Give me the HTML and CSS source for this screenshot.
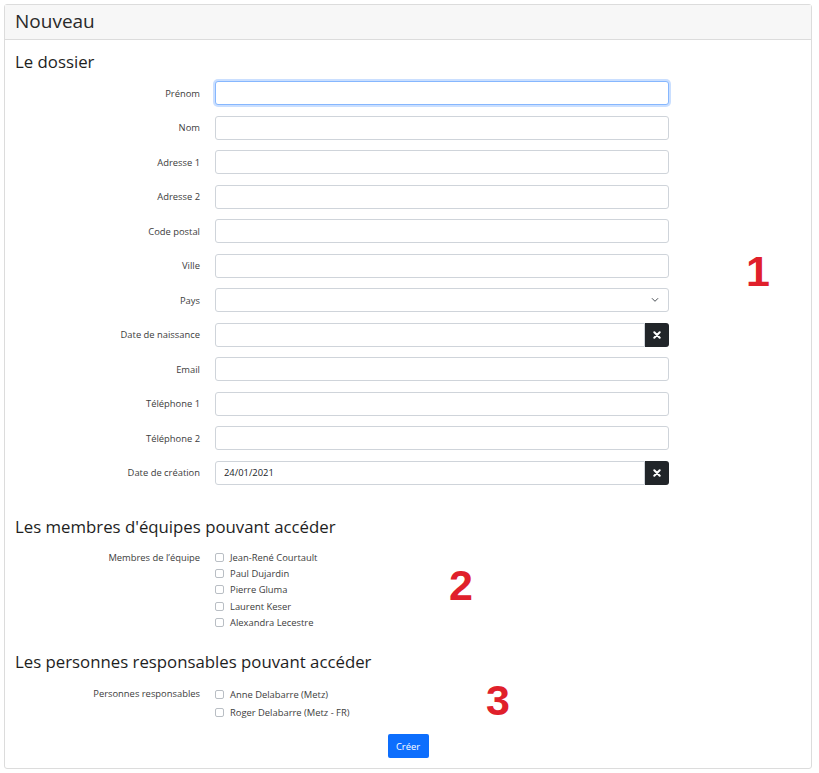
FILE: index.html
```html
<!DOCTYPE html>
<html lang="fr">
<head>
<meta charset="utf-8">
<title>Nouveau</title>
<link rel="stylesheet" href="styles.css">
</head>
<body>
<div class="card">
  <div class="card-header">Nouveau</div>
  <div class="card-body">
    <h2 class="section-title first">Le dossier</h2>
    <div class="form-grid">
      <label class="lbl">Prénom</label><div class="ctl"><input class="inp focus" type="text"></div>
      <label class="lbl">Nom</label><div class="ctl"><input class="inp" type="text"></div>
      <label class="lbl">Adresse 1</label><div class="ctl"><input class="inp" type="text"></div>
      <label class="lbl">Adresse 2</label><div class="ctl"><input class="inp" type="text"></div>
      <label class="lbl">Code postal</label><div class="ctl"><input class="inp" type="text"></div>
      <label class="lbl">Ville</label><div class="ctl"><input class="inp" type="text"></div>
      <label class="lbl">Pays</label>
      <div class="ctl select">
        <span class="sel-box"></span>
        <svg class="chev" width="8" height="6" viewBox="0 0 8 6"><path d="M1.2 1.5 L4 4.3 L6.8 1.5" fill="none" stroke="#4a4f55" stroke-width="1" stroke-linecap="round" stroke-linejoin="round"/></svg>
      </div>
      <label class="lbl">Date de naissance</label>
      <div class="ctl group">
        <input class="inp grp" type="text">
        <span class="clear-btn"><svg width="8" height="8" viewBox="0 0 8 8"><path d="M1.3 1.3 L6.7 6.7 M6.7 1.3 L1.3 6.7" stroke="#fff" stroke-width="2" stroke-linecap="round"/></svg></span>
      </div>
      <label class="lbl">Email</label><div class="ctl"><input class="inp" type="text"></div>
      <label class="lbl">Téléphone 1</label><div class="ctl"><input class="inp" type="text"></div>
      <label class="lbl">Téléphone 2</label><div class="ctl"><input class="inp" type="text"></div>
      <label class="lbl">Date de création</label>
      <div class="ctl group">
        <input class="inp grp" type="text" value="24/01/2021">
        <span class="clear-btn"><svg width="8" height="8" viewBox="0 0 8 8"><path d="M1.3 1.3 L6.7 6.7 M6.7 1.3 L1.3 6.7" stroke="#fff" stroke-width="2" stroke-linecap="round"/></svg></span>
      </div>
    </div>

    <h2 class="section-title second">Les membres d'équipes pouvant accéder</h2>
    <div class="check-row">
      <span class="lbl">Membres de l’équipe</span>
      <div class="checks">
        <label class="chk"><span class="box"></span>Jean-René Courtault</label>
        <label class="chk"><span class="box"></span>Paul Dujardin</label>
        <label class="chk"><span class="box"></span>Pierre Gluma</label>
        <label class="chk"><span class="box"></span>Laurent Keser</label>
        <label class="chk"><span class="box"></span>Alexandra Lecestre</label>
      </div>
    </div>

    <h2 class="section-title third">Les personnes responsables pouvant accéder</h2>
    <div class="check-row resp">
      <span class="lbl">Personnes responsables</span>
      <div class="checks">
        <label class="chk"><span class="box"></span>Anne Delabarre (Metz)</label>
        <label class="chk"><span class="box"></span>Roger Delabarre (Metz - FR)</label>
      </div>
    </div>

    <div class="actions"><button class="btn" type="button">Créer</button></div>
  </div>
  <span class="mark m1">1</span>
  <span class="mark m2">2</span>
  <span class="mark m3">3</span>
</div>
</body>
</html>
```
FILE: styles.css
```css
* { box-sizing: border-box; }
html, body { background: #fff; }
body {
  margin: 0;
  padding: 4px 7px 0 4px;
  font-family: "Open Sans", "Noto Sans", sans-serif;
  color: #212529;
}
.card {
  position: relative;
  border: 1px solid #dcdcdc;
  border-radius: 3px;
  height: 765px;
}
.card-header {
  height: 35px;
  background: #f7f7f7;
  border-bottom: 1px solid #dcdcdc;
  padding: 0 10px;
  font-size: 19px;
  line-height: 33px;
  color: #2a2a2a;
}
.card-body {
  padding: 0 10px;
}
.section-title {
  margin: 0;
  font-size: 16.8px;
  font-weight: 400;
  line-height: 22px;
  color: #1e1e1e;
}
.section-title.first { margin-top: 11px; margin-bottom: 8px; }
.section-title.second { margin-top: 31px; margin-bottom: 12px; }
.section-title.third { margin-top: 21px; margin-bottom: 12px; }
.form-grid {
  display: grid;
  grid-template-columns: 185px 454px;
  column-gap: 15px;
  row-gap: 10.5px;
  align-items: center;
}
.lbl {
  text-align: right;
  font-size: 9.4px;
  color: #3d3d3d;
  white-space: nowrap;
}
.ctl { height: 24px; position: relative; }
.inp {
  display: block;
  width: 100%;
  height: 24px;
  border: 1px solid #cfd4da;
  border-radius: 3px;
  padding: 0 8px;
  font: 9.4px "Open Sans", "Noto Sans", sans-serif;
  color: #212529;
  background: #fff;
  outline: none;
}
.inp.focus {
  border-color: #86b7fe;
  box-shadow: 0 0 0 2px rgba(13, 110, 253, 0.22);
}
.select .sel-box {
  display: block;
  height: 24px;
  border: 1px solid #cfd4da;
  border-radius: 3px;
}
.select .chev {
  position: absolute;
  right: 10px;
  top: 9px;
}
.group { display: flex; }
.inp.grp {
  flex: 1;
  border-radius: 3px 0 0 3px;
}
.clear-btn {
  width: 24px;
  height: 24px;
  background: #212529;
  border-radius: 0 3px 3px 0;
  display: flex;
  align-items: center;
  justify-content: center;
}
.check-row {
  display: grid;
  grid-template-columns: 185px auto;
  column-gap: 15px;
  align-items: start;
}
.check-row .lbl { line-height: 16px; }
.checks { display: flex; flex-direction: column; }
.chk {
  display: flex;
  align-items: center;
  height: 16.2px;
  font-size: 9.4px;
  color: #3d3d3d;
}
.resp .chk { height: 18px; }
.resp .lbl { line-height: 18px; }
.chk .box {
  width: 9px;
  height: 9px;
  border: 1px solid #b9bec4;
  border-radius: 2px;
  margin-right: 6px;
  background: #fff;
}
.actions {
  display: flex;
  justify-content: center;
  margin-top: 13px;
}
.btn {
  width: 41px;
  height: 24px;
  border: none;
  border-radius: 2px;
  background: #0d6efd;
  color: #fff;
  font: 9.4px "Open Sans", "Noto Sans", sans-serif;
  padding: 0;
}
.mark {
  position: absolute;
  font-family: "Liberation Sans", Arial, sans-serif;
  font-weight: 700;
  font-size: 43px;
  line-height: 1;
  color: #e0202b;
}
.m1 { left: 741px; top: 245px; }
.m2 { left: 444px; top: 559px; }
.m3 { left: 481px; top: 674px; }
```
